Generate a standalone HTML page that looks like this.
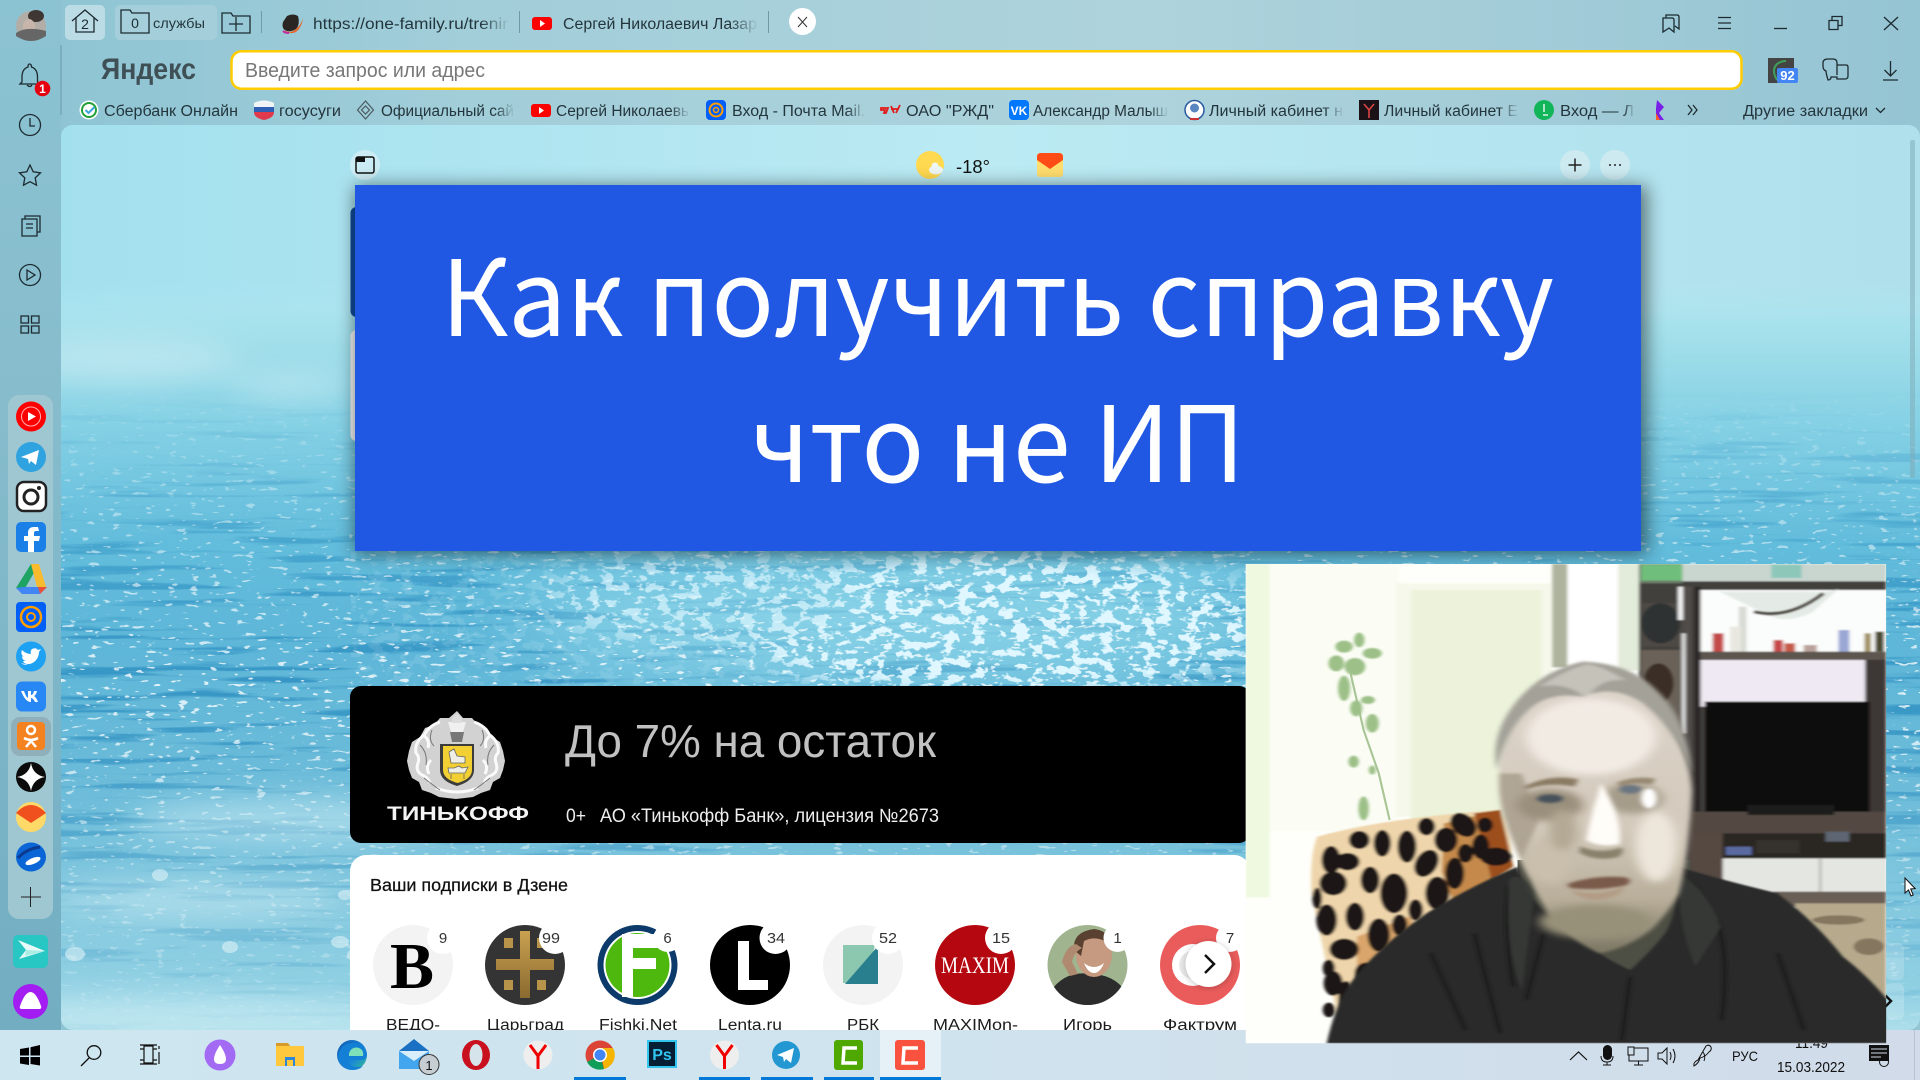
<!DOCTYPE html>
<html lang="ru"><head><meta charset="utf-8"><title>Как получить справку</title>
<style>html,body{margin:0;padding:0;width:1920px;height:1080px;overflow:hidden;background:#a8d0da}
svg{display:block}
text{font-family:"Liberation Sans","Noto Sans CJK SC",sans-serif}
.t{font-size:15.5px;fill:#24363d}
.ft{font-size:15.5px;fill:url(#f1)}
.n{font-size:15.5px;fill:#1c1c1c}
.b{font-size:15px;fill:#333;text-anchor:middle}
.i{fill:none;stroke:#1d2b31;stroke-width:1.3}
</style></head><body>
<svg xmlns="http://www.w3.org/2000/svg" width="1920" height="1080" viewBox="0 0 1920 1080">
<defs>
<linearGradient id="chrome" x1="0" x2="1" y1="0" y2="0"><stop offset="0" stop-color="#8cc3d3"/><stop offset=".25" stop-color="#a2ced9"/><stop offset=".6" stop-color="#aed3dc"/><stop offset="1" stop-color="#95c4d3"/></linearGradient>
<linearGradient id="side" x1="0" x2="0" y1="0" y2="1"><stop offset="0" stop-color="#8cc3d2"/><stop offset=".4" stop-color="#86bccc"/><stop offset="1" stop-color="#72adc2"/></linearGradient>
<linearGradient id="water" x1="0" x2="0" y1="0" y2="1">
<stop offset="0" stop-color="#ade4ef"/><stop offset=".2" stop-color="#ace5ef"/><stop offset=".25" stop-color="#9edde9"/><stop offset=".34" stop-color="#82cfe4"/><stop offset=".46" stop-color="#62bcdb"/><stop offset=".58" stop-color="#5eb6d8"/><stop offset=".74" stop-color="#6dbcd9"/><stop offset=".87" stop-color="#85c9df"/><stop offset=".96" stop-color="#90d0e3"/><stop offset="1" stop-color="#addfea"/></linearGradient>
<linearGradient id="topfade" x1="0" x2="1" y1="0" y2="0"><stop offset="0" stop-color="#a3e0ee"/><stop offset=".5" stop-color="#bbeaf3"/><stop offset="1" stop-color="#afe0ec"/></linearGradient>
<linearGradient id="tf2" x1="0" x2="0" y1="0" y2="1"><stop offset="0" stop-color="#fff"/><stop offset=".8" stop-color="#fff"/><stop offset="1" stop-color="#000"/></linearGradient>
<mask id="mTop" maskUnits="userSpaceOnUse" x="61" y="125" width="1859" height="905"><rect x="61" y="125" width="1859" height="905" fill="#000"/><rect x="61" y="125" width="1859" height="200" fill="url(#tf2)"/></mask>
<linearGradient id="rm" x1="0" x2="0" y1="0" y2="1"><stop offset="0" stop-color="#000"/><stop offset=".29" stop-color="#000"/><stop offset=".42" stop-color="#777"/><stop offset=".62" stop-color="#fff"/><stop offset=".8" stop-color="#888"/><stop offset="1" stop-color="#222"/></linearGradient>
<mask id="mRip" maskUnits="userSpaceOnUse" x="61" y="125" width="1859" height="905"><rect x="61" y="125" width="1859" height="905" fill="url(#rm)"/></mask>
<filter id="ripple" x="0" y="0" width="1" height="1" color-interpolation-filters="sRGB"><feTurbulence type="fractalNoise" baseFrequency="0.006 0.11" numOctaves="3" seed="7"/><feColorMatrix values="0 0 0 0 .10  0 0 0 0 .50  0 0 0 0 .72  7 0 0 0 -3.9"/></filter>
<filter id="spark" x="0" y="0" width="1" height="1" color-interpolation-filters="sRGB"><feTurbulence type="fractalNoise" baseFrequency="0.09 0.24" numOctaves="2" seed="11"/><feColorMatrix values="0 0 0 0 1  0 0 0 0 1  0 0 0 0 1  18 0 0 0 -12"/></filter>
<filter id="foam" x="0" y="0" width="1" height="1" color-interpolation-filters="sRGB"><feTurbulence type="fractalNoise" baseFrequency="0.07 0.12" numOctaves="3" seed="3"/><feColorMatrix values="0 0 0 0 .88  0 0 0 0 .97  0 0 0 0 1  14 0 0 0 -7.4"/></filter>
<filter id="b40"><feGaussianBlur stdDeviation="40"/></filter>
<filter id="b18"><feGaussianBlur stdDeviation="18 10"/></filter>
<filter id="b3"><feGaussianBlur stdDeviation="3.5 2.5"/></filter>
<filter id="b6"><feGaussianBlur stdDeviation="6 4"/></filter>
<filter id="b10" x="-30%" y="-30%" width="160%" height="160%"><feGaussianBlur stdDeviation="13 10"/></filter>
<filter id="b14"><feGaussianBlur stdDeviation="18 14"/></filter>
<filter id="sh" x="-5%" y="-8%" width="110%" height="116%"><feGaussianBlur stdDeviation="9"/></filter>
<mask id="mFoam" maskUnits="userSpaceOnUse" x="351" y="550" width="900" height="140"><rect x="351" y="550" width="900" height="140" fill="#222"/><ellipse cx="1000" cy="625" rx="270" ry="70" fill="#fff" filter="url(#b18)"/><ellipse cx="700" cy="600" rx="150" ry="45" fill="#aaa" filter="url(#b18)"/></mask>
<clipPath id="content"><rect x="61" y="125" width="1859" height="905" rx="12"/></clipPath>
<clipPath id="cam"><rect x="13" y="12" width="1477" height="1438"/></clipPath>
<clipPath id="zen"><rect x="351" y="856" width="895" height="174"/></clipPath>
<linearGradient id="f1"><stop offset="0" stop-color="#24363d"/><stop offset=".86" stop-color="#24363d"/><stop offset="1" stop-color="#24363d" stop-opacity=".05"/></linearGradient>
<linearGradient id="task" x1="0" x2="1" y1="0" y2="0"><stop offset="0" stop-color="#cee6f0"/><stop offset=".5" stop-color="#cfe3ee"/><stop offset="1" stop-color="#d1dbe9"/></linearGradient>
<linearGradient id="gold" x1="0" x2="0" y1="0" y2="1"><stop offset="0" stop-color="#c9a14f"/><stop offset="1" stop-color="#8a6a30"/></linearGradient>
<linearGradient id="jaw" x1="0" x2="0" y1="0" y2="1"><stop offset="0" stop-color="#ddd4ca"/><stop offset=".55" stop-color="#d3c9bb"/><stop offset=".8" stop-color="#b8ae9a"/><stop offset="1" stop-color="#7a7662"/></linearGradient>
<linearGradient id="edge1" x1="0" x2="1" y1="0" y2="1"><stop offset="0" stop-color="#0f5cb0"/><stop offset=".6" stop-color="#1a86d8"/><stop offset="1" stop-color="#36c08c"/></linearGradient>
</defs>

<!-- window chrome -->
<rect width="1920" height="1030" fill="url(#chrome)"/>
<rect width="61" height="1030" fill="url(#side)"/>
<g clip-path="url(#content)">
<rect x="61" y="125" width="1859" height="905" fill="url(#water)"/>
<rect x="61" y="125" width="1859" height="200" fill="url(#topfade)" mask="url(#mTop)"/>
<rect x="61" y="125" width="1859" height="905" filter="url(#ripple)" mask="url(#mRip)" opacity=".6"/>
<ellipse cx="900" cy="620" rx="380" ry="60" fill="#a8e6f2" opacity=".6" filter="url(#b40)"/>
<rect x="61" y="125" width="1859" height="905" filter="url(#spark)" mask="url(#mRip)" opacity=".8"/>
<rect x="351" y="550" width="900" height="140" filter="url(#foam)" mask="url(#mFoam)"/>
<g fill="#cfeef5" opacity=".55" filter="url(#b14)"><ellipse cx="300" cy="820" rx="170" ry="22"/><ellipse cx="200" cy="900" rx="150" ry="18"/><ellipse cx="160" cy="1015" rx="240" ry="22"/><ellipse cx="120" cy="360" rx="120" ry="24"/><ellipse cx="290" cy="385" rx="60" ry="14"/></g>
<g fill="#e4f6fa" opacity=".55"><ellipse cx="340" cy="942" rx="9" ry="6"/><ellipse cx="355" cy="955" rx="8" ry="6"/><ellipse cx="230" cy="947" rx="8" ry="6"/><ellipse cx="345" cy="895" rx="7" ry="5"/><ellipse cx="160" cy="875" rx="8" ry="6"/><ellipse cx="75" cy="954" rx="10" ry="7"/></g>
<rect x="1910" y="140" width="5" height="338" fill="#7ea9b5" opacity=".5" rx="2"/>
<rect x="1886" y="943" width="18" height="37" rx="6" fill="#fff" opacity=".18"/><rect x="1886" y="983" width="18" height="37" rx="6" fill="#fff" opacity=".18"/>
</g>
<path d="M1885 995l6 6-6 6" fill="none" stroke="#111" stroke-width="2.5"/>

<!-- avatar -->
<circle cx="31" cy="26" r="15" fill="#b3ada8"/><ellipse cx="36" cy="16" rx="8" ry="6" fill="#3e3733"/><ellipse cx="29" cy="27" rx="6" ry="8" fill="#c7b5ab"/><path d="M16 33q10-7 30-2v5q-15 10-30 0z" fill="#666"/>

<!-- tabs -->
<rect x="65" y="5" width="40" height="35" rx="5" fill="#bcdce5"/>
<rect x="115" y="5" width="102" height="35" rx="5" fill="#a4cfda"/>
<path class="i" d="M72 21l13-11 13 11m-4-3v14H76V18"/><text x="85" y="29" font-size="14" text-anchor="middle" fill="#1d2b31">2</text>
<path class="i" d="M121 33V10h9l2 3h17v20z"/><text x="135" y="28" font-size="14" text-anchor="middle" fill="#1d2b31">0</text>
<text x="153" y="28" font-size="14" textLength="52" lengthAdjust="spacingAndGlyphs" fill="#24363d">службы</text>
<path class="i" d="M222 33V13h9l2 3h17v17zm14-16v14m-7-7h14"/>
<path d="M261.500 11v22M519.500 11v22M768.500 11v22" stroke="#6f9aa6" stroke-width="1"/>
<path d="M287 31q-6-2-4-9l4-6q6-3 11 0 2 7-1 12-4 4-10 3z" fill="#2a2523"/><path d="M284 30q7 4 12-1 5-4 7-11-1 9-7 14-7 3-12-2z" fill="#e9662c"/><path d="M283 31q2 2 6 2" stroke="#c0309a" stroke-width="2" fill="none"/>
<text x="313" y="29" class="ft" textLength="195" lengthAdjust="spacingAndGlyphs">https://one-family.ru/trenir</text>
<rect x="532" y="17" width="20" height="13" rx="3" fill="#f00"/><path d="M540 20l5 3.500-5 3.500z" fill="#fff"/>
<text x="563" y="29" class="ft" textLength="194" lengthAdjust="spacingAndGlyphs">Сергей Николаевич Лазар</text>
<circle cx="802.500" cy="21.500" r="13.500" fill="#fff"/><path d="M798 17l9 10m0-10l-9 10" stroke="#333" stroke-width="1"/>

<!-- window controls -->
<path class="i" d="M1663 18h9q2 0 2 2v12l-5-4-6 4zM1666 18v-3h11q2 0 2 2v12l-4-3"/>
<path class="i" d="M1718 17.500h13M1718 23h13M1718 28.500h13"/>
<path class="i" d="M1774 28.500h13"/>
<path class="i" d="M1829 20.500h9v9h-9zM1832 20v-3.500h10v9h-4"/>
<path class="i" d="M1884 17l14 13m0-13l-14 13"/>

<!-- address row -->
<text x="101" y="79" font-size="30" font-weight="700" textLength="95" lengthAdjust="spacingAndGlyphs" fill="#3e4f56">Яндекс</text>
<rect x="231.500" y="51.250" width="1510" height="37.500" rx="10" fill="#fff" stroke="#ffcc00" stroke-width="2.500"/>
<text x="245" y="77" font-size="20" textLength="240" lengthAdjust="spacingAndGlyphs" fill="#777">Введите запрос или адрес</text>
<rect x="1768" y="58" width="26" height="25" fill="#444"/><path d="M1777 80q-6-10 0-16 4-3 9-3" fill="none" stroke="#3f9e5a" stroke-width="2"/><rect x="1777" y="68" width="21" height="15" rx="2" fill="#4285f4"/><text x="1787.500" y="80" font-size="13" font-weight="700" text-anchor="middle" fill="#fff">92</text>
<path class="i" d="M1828 80q-2-7-2-9-3-1-3-5v-3q0-4 5-4h5q4 0 4 4v2h9q2 0 2 2v9q0 3-3 3h-8v-2h-6q0 3-3 3zm9-17v12"/>
<path class="i" d="M1890.500 61v15m-6-6l6 6 6-6M1883 80h15"/>

<!-- bookmarks -->
<g>
<circle cx="89" cy="110" r="9.500" fill="#fff"/><circle cx="89" cy="110" r="7" fill="none" stroke="#21a038" stroke-width="2"/><path d="M85.500 110l3 3 6-6" fill="none" stroke="#3aa6d8" stroke-width="2"/>
<text x="104" y="116" class="t" textLength="134" lengthAdjust="spacingAndGlyphs">Сбербанк Онлайн</text>
<path d="M254 103q10-5 20 0v6h-20z" fill="#f0f4f6"/><path d="M254 107h20v6h-20z" fill="#2f5fb5"/><path d="M254 112h20q0 6-10 8-10-2-10-8z" fill="#e0394b"/>
<text x="279" y="116" class="t" textLength="62" lengthAdjust="spacingAndGlyphs">госусуги</text>
<path d="M365.500 101l8 9-8 9-8-9zM365.500 106l4 4-4 4-4-4z" fill="none" stroke="#4a5a60" stroke-width="1.200"/>
<text x="381" y="116" class="ft" textLength="133" lengthAdjust="spacingAndGlyphs">Официальный сай</text>
<rect x="531" y="104" width="20" height="13" rx="3" fill="#f00"/><path d="M539 107l5 3.500-5 3.500z" fill="#fff"/>
<text x="556" y="116" class="ft" textLength="133" lengthAdjust="spacingAndGlyphs">Сергей Николаевь</text>
<rect x="706" y="100" width="20" height="20" rx="4" fill="#005ff9"/><circle cx="716" cy="110" r="6.500" fill="none" stroke="#ff9e00" stroke-width="2"/><circle cx="716" cy="110" r="2.500" fill="none" stroke="#ff9e00" stroke-width="1.500"/>
<text x="732" y="116" class="ft" textLength="133" lengthAdjust="spacingAndGlyphs">Вход - Почта Mail.</text>
<path d="M881 108h7l-2 5h-2l1-3h-4zM891 106l3 7m6-8l-4 8m-5-4h8" stroke="#e21a1a" stroke-width="1.800" fill="none"/>
<text x="906" y="116" class="t" textLength="88" lengthAdjust="spacingAndGlyphs">ОАО "РЖД"</text>
<rect x="1009" y="100" width="20" height="20" rx="4" fill="#0077ff"/><text x="1019" y="115" font-size="12" font-weight="700" text-anchor="middle" fill="#fff">VK</text>
<text x="1033" y="116" class="ft" textLength="135" lengthAdjust="spacingAndGlyphs">Александр Малыш</text>
<circle cx="1194.500" cy="110" r="9.500" fill="#fff" stroke="#2a5aa0" stroke-width="1.500"/><circle cx="1194.500" cy="108" r="4.500" fill="#5b87c0"/><path d="M1190 119h9" stroke="#c33" stroke-width="2"/>
<text x="1209" y="116" class="ft" textLength="134" lengthAdjust="spacingAndGlyphs">Личный кабинет н</text>
<rect x="1359" y="100" width="20" height="20" fill="#1a1216"/><path d="M1364 104l5 6 5-6m-5 6v8" stroke="#d44" stroke-width="1.600" fill="none"/>
<text x="1384" y="116" class="ft" textLength="134" lengthAdjust="spacingAndGlyphs">Личный кабинет Е</text>
<circle cx="1544" cy="110" r="10" fill="#13b559"/><path d="M1544 104v8m-1 3h5" stroke="#fff" stroke-width="1.300"/>
<text x="1560" y="116" class="ft" textLength="74" lengthAdjust="spacingAndGlyphs">Вход — Л</text>
<path d="M1657 100l7 7-5 6 5 7h-8v-12z" fill="#7a1fe6"/><path d="M1656 113l4 7h-4z" fill="#ff5a20"/>
<path d="M1688 105l4 5-4 5m5-10l4 5-4 5" class="i"/>
<text x="1743" y="116" class="t" textLength="125" lengthAdjust="spacingAndGlyphs">Другие закладки</text>
<path d="M1876 108l4.500 4.500 4.500-4.500" class="i"/>
</g>

<!-- sidebar -->
<path d="M29.500 64q2 0 2 3 6 2 6 10v5l2 2H20l2-2v-5q0-8 6-10 0-3 1.500-3zM27 85q3 3 5 0" class="i"/>
<circle cx="42.500" cy="88.500" r="7.800" fill="#e5000f"/><text x="42.500" y="93" font-size="12" font-weight="700" text-anchor="middle" fill="#fff">1</text>
<path d="M61 45v70" stroke="#6f9aa6" stroke-width="1"/>
<circle cx="30" cy="125" r="10.500" class="i"/><path class="i" d="M30 118v8h5"/>
<path class="i" d="M30 165l3.200 6.800 7.300 1-5.300 5.100 1.300 7.300-6.500-3.500-6.500 3.500 1.300-7.300-5.300-5.100 7.300-1z"/>
<path class="i" d="M22 219h15v17H22zM25 219v-3h15v16h-3M26 224h7M26 228h7"/>
<circle cx="30" cy="275" r="10.500" class="i"/><path class="i" d="M27 270l8 5-8 5z"/>
<path class="i" d="M21 316h7.500v7H21zM31.500 316H39v7h-7.500zM21 326h7.500v7H21zM31.500 326H39v7h-7.500z"/>
<rect x="8" y="395" width="45" height="524" rx="11" fill="#9fc7d2"/>
<rect x="11" y="717" width="40" height="39" rx="9" fill="#8fb0bb"/>
<circle cx="31" cy="416.500" r="15" fill="#f00"/><circle cx="31" cy="416.500" r="9.500" fill="none" stroke="#ffb3b3" stroke-width="1"/><path d="M28 412l8 4.500-8 4.500z" fill="#fff"/>
<circle cx="31" cy="457" r="15" fill="#2fa3e0"/><path d="M21 457l18-7-3 15-5-4-2 3-1-5z" fill="#fff"/>
<rect x="17" y="482" width="29" height="29" rx="7" fill="#fff" stroke="#222" stroke-width="2.500"/><circle cx="31" cy="497" r="7" fill="none" stroke="#222" stroke-width="3"/><circle cx="39" cy="488" r="2" fill="#222"/>
<rect x="16" y="522" width="30" height="30" rx="5" fill="#1b7fe8"/><path d="M38 527h-4q-6 0-6 6v3h-4v5h4v11h6v-11h5l1-5h-6v-3q0-2 2-2h3z" fill="#fff"/>
<path d="M16 588l15-24 8 0-15 26z" fill="#1da462"/><path d="M16 588l6 6h18l7-7H24z" fill="#4285f4"/><path d="M31 564h8l7 23-9 0z" fill="#f9bb2d"/><path d="M38 587h9l-7 7z" fill="#e8503e"/>
<rect x="16" y="602" width="30" height="30" rx="4" fill="#005ff9"/><circle cx="31" cy="617" r="10" fill="none" stroke="#ff9e00" stroke-width="2.500"/><circle cx="31" cy="617" r="4" fill="none" stroke="#ff9e00" stroke-width="2"/>
<circle cx="31" cy="656.500" r="15" fill="#1da1f2"/><path d="M21 663q12 4 17-6 1-3 1-5l2-3-3 1q-2-3-6-1-2 2-1 5-5 0-9-4-2 4 2 7l-2-1q0 4 4 5h-3q1 3 5 3-3 2-7-1z" fill="#fff"/>
<rect x="16" y="681.500" width="30" height="30" rx="6" fill="#2787f5"/><path d="M21 691h3q2 6 4 7v-7h3v4q2 0 3-4h3q-1 4-3 5 2 1 4 6h-3q-2-4-4-4v4h-1q-5-1-9-11z" fill="#fff"/>
<rect x="17" y="722" width="28" height="28" rx="4" fill="#f58220"/><circle cx="31" cy="730" r="4" fill="none" stroke="#fff" stroke-width="2.500"/><path d="M24 738q7 4 14 0M31 741l-5 6m5-6l5 6" stroke="#fff" stroke-width="2.500" fill="none"/>
<ellipse cx="31" cy="777" rx="15" ry="15" fill="#0b0b0b"/><path d="M31 763q2 12 14 14-12 2-14 14-2-12-14-14 12-2 14-14z" fill="#fff"/>
<circle cx="31" cy="817" r="15" fill="#ffd968"/><path d="M16 813q15-16 30 0l-15 10z" fill="#f0501e"/>
<ellipse cx="31" cy="857" rx="15" ry="14.500" fill="#0a66d6"/><path d="M18 858q8-9 22-11" stroke="#0b3a90" stroke-width="3" fill="none"/><ellipse cx="33" cy="861" rx="8" ry="3" fill="#fff" transform="rotate(-22 33 861)"/>
<path d="M21 897h20M30.500 887v20" stroke="#222" stroke-width="1"/>
<rect x="13" y="935" width="35" height="33" rx="5" fill="#29c7c4"/><path d="M18 940l27 11-26 8 7-9z" fill="#e6fbf8"/><path d="M26 950l19 1-20 5z" fill="#a9ece4"/>
<circle cx="30.500" cy="1001.500" r="17.500" fill="#a31cf2"/><path d="M22 1009q-3 0-2-3 5-14 10.500-14t10.500 14q1 3-2 3z" fill="#fff"/>

<!-- widgets row -->
<circle cx="365" cy="165" r="15" fill="#d8f0f5" opacity=".7"/><rect x="356" y="157" width="18" height="16" rx="2" fill="none" stroke="#111" stroke-width="1.500"/><rect x="356" y="157" width="9" height="5" fill="#111"/>
<circle cx="930" cy="165" r="14" fill="#ffd94f"/><ellipse cx="936" cy="170" rx="7" ry="4.500" fill="#eef6f6"/><circle cx="935" cy="166" r="3.500" fill="#eef6f6"/>
<text x="956" y="173" font-size="18" textLength="34" lengthAdjust="spacingAndGlyphs" fill="#111">-18°</text>
<rect x="1037" y="153" width="26" height="24" rx="3" fill="#ffdd6e"/><path d="M1037 157q0-4 4-4h18q4 0 4 4v3l-13 9-13-9z" fill="#ff4c16"/>
<circle cx="1575" cy="165" r="15" fill="#d5ecf1" opacity=".75"/><path d="M1568.500 165h13M1575 158.500v13" stroke="#222" stroke-width="1.500"/>
<circle cx="1615" cy="165" r="15" fill="#d5ecf1" opacity=".75"/><path d="M1609 165h2M1614 165h2M1619 165h2" stroke="#222" stroke-width="1.600"/>

<!-- cards behind -->
<rect x="350.500" y="207" width="20" height="110" rx="6" fill="#0f4c9c"/>
<rect x="350.500" y="330" width="20" height="111" rx="6" fill="#f3f5f6"/>

<!-- blue title card -->
<rect x="355" y="186" width="1292" height="368" fill="#000" opacity=".5" filter="url(#sh)"/>
<rect x="355" y="185" width="1286" height="366" fill="#2058e3"/>
<text x="441" y="336" font-size="105" textLength="1113" lengthAdjust="spacingAndGlyphs" fill="#fff" style="font-family:'Noto Sans CJK SC','Liberation Sans',sans-serif">Как получить справку</text>
<text x="750" y="482" font-size="105" textLength="495" lengthAdjust="spacingAndGlyphs" fill="#fff" style="font-family:'Noto Sans CJK SC','Liberation Sans',sans-serif">что не ИП</text>

<!-- tinkoff banner -->
<rect x="350" y="686" width="900" height="157" rx="11" fill="#000"/>
<g>
<path d="M457 711l6 7 9 0 6 7 9 3 5 9 8 5 3 9 2 10-2 9-3 8-7 4-3 8-9 3-8 4-8 1-9 1-9-1-8-1-8-4-9-3-3-8-7-4-3-8-2-9 2-10 3-9 8-5 5-9 9-3 6-7 9 0z" fill="#d2d2d2"/>
<g fill="none" stroke="#fafafa" stroke-width="3"><path d="M424 735q-10 8-8 18 4 4 2 10-3 8 4 12 6 2 8 8"/><path d="M490 735q10 8 8 18-4 4-2 10 3 8-4 12-6 2-8 8"/><path d="M440 722q-12 4-16 14 6 4 4 12"/><path d="M474 722q12 4 16 14-6 4-4 12"/><path d="M436 788q21 8 42 0"/><path d="M431 760q-6 6-2 14M483 760q6 6 2 14"/></g>
<g fill="none" stroke="#777" stroke-width="1"><path d="M420 745q8 8 6 20M494 745q-8 8-6 20M432 730q-4 10 2 16M482 730q4 10-2 16M424 778q10 8 16 12M490 778q-10 8-16 12"/></g>
<path d="M448 722h18l-3 10h-12z" fill="#f0f0f0"/><path d="M452 718l5-4 5 4v5h-10z" fill="#ddd"/><path d="M450 732h14l-2 10h-10z" fill="#777"/>
<path d="M440 744h34v26q0 11-17 16-17-5-17-16z" fill="#3c3c3c"/>
<path d="M443 746h29v24q0 9-14.500 13-14.500-4-14.500-13z" fill="#f2d033"/>
<path d="M449 752l5-3 3 7 8 1v6h-14zM449 773h16l3-6-6 1-3-2-5 2-6 0zM451 774v5M464 774v5" fill="#f0efe6" stroke="#666" stroke-width=".8"/>
<text x="387" y="820" font-size="19" font-weight="700" textLength="142" lengthAdjust="spacingAndGlyphs" fill="#f4f4f4">ТИНЬКОФФ</text>
</g>
<text x="565" y="757" font-size="46" textLength="371" lengthAdjust="spacingAndGlyphs" fill="#c1c1c1">До 7% на остаток</text>
<text x="566" y="822" font-size="19" textLength="20" lengthAdjust="spacingAndGlyphs" fill="#eee">0+</text>
<text x="600" y="822" font-size="19" textLength="339" lengthAdjust="spacingAndGlyphs" fill="#eee">АО «Тинькофф Банк», лицензия №2673</text>

<!-- zen card -->
<rect x="350" y="855" width="900" height="200" rx="16" fill="#fff"/>
<text x="370" y="891" font-size="17.500" textLength="198" lengthAdjust="spacingAndGlyphs" fill="#111" stroke="#111" stroke-width=".25">Ваши подписки в Дзене</text>
<g clip-path="url(#zen)">
<circle cx="413" cy="965" r="40" fill="#f3f3f3"/><text x="412" y="988" font-size="66" font-weight="700" text-anchor="middle" fill="#000" style="font-family:'Liberation Serif',serif">В</text>
<circle cx="525" cy="965" r="40" fill="#343434"/><path d="M520 931h10v28h24v11h-24v28h-10v-28h-24v-11h24z" fill="url(#gold)"/><g fill="#b8934a"><rect x="504" y="938" width="9" height="10"/><rect x="537" y="938" width="9" height="10"/><rect x="504" y="980" width="9" height="10"/><rect x="537" y="980" width="9" height="10"/></g>
<circle cx="637.500" cy="965" r="40" fill="#0b3a6b"/><circle cx="637.500" cy="965" r="34" fill="#fff"/><circle cx="637.500" cy="965" r="32" fill="#4fb80f"/><path d="M622 934h32v-1l6 6v9h-27v10h23v11h-23v28h-11z" fill="#fff"/>
<circle cx="750" cy="965" r="40" fill="#000"/><path d="M738 941h11v39h19v10h-30z" fill="#fff"/>
<circle cx="863" cy="965" r="40" fill="#f3f3f3"/><path d="M843 945h32l-2 8-18 30h-12z" fill="#8cc7b0"/><path d="M878 946v38h-33z" fill="#2a7f8e"/>
<circle cx="975" cy="965" r="40" fill="#b5070f"/><text x="941" y="973" font-size="23" textLength="68" lengthAdjust="spacingAndGlyphs" fill="#fff" style="font-family:'Liberation Serif',serif">MAXIM</text>
<clipPath id="ig"><circle cx="1087.500" cy="965" r="40"/></clipPath>
<g clip-path="url(#ig)"><rect x="1047" y="925" width="81" height="81" fill="#9fb48f"/><path d="M1050 992q15-22 40-18 24 0 36 18v15h-76z" fill="#2c2c2c"/><ellipse cx="1094" cy="955" rx="18" ry="22" fill="#c69a80"/><path d="M1074 950q-2-18 20-21 16 2 14 14-12-8-24-2l-3 15z" fill="#5a4030"/><path d="M1062 962q4-16 14-18l6 4q-8 4-10 14l6 12-8 2z" fill="#b08a70"/><path d="M1084 963q10 8 20 0-4 10-10 10t-10-10z" fill="#fff"/></g>
<circle cx="1200" cy="965" r="40" fill="#ea5c5c"/><path d="M1180 952h40v26h-30z" fill="#f5f5f5"/><circle cx="1193" cy="965" r="21" fill="#fff"/><circle cx="1193" cy="965" r="14" fill="#ececec"/>
<g fill="#fff"><circle cx="443" cy="938" r="16"/><circle cx="555" cy="938" r="16"/><circle cx="667.500" cy="938" r="14"/><circle cx="775.500" cy="938" r="16"/><circle cx="888" cy="938" r="16"/><circle cx="1001" cy="938" r="16"/><circle cx="1117.500" cy="938" r="14"/><circle cx="1230" cy="938" r="14"/></g>
<text x="443" y="943" class="b">9</text><text x="542" y="943" font-size="15" fill="#333" textLength="18" lengthAdjust="spacingAndGlyphs">99</text><text x="667.500" y="943" class="b">6</text><text x="767" y="943" font-size="15" fill="#333" textLength="18" lengthAdjust="spacingAndGlyphs">34</text><text x="879" y="943" font-size="15" fill="#333" textLength="18" lengthAdjust="spacingAndGlyphs">52</text><text x="992" y="943" font-size="15" fill="#333" textLength="18" lengthAdjust="spacingAndGlyphs">15</text><text x="1117.500" y="943" class="b">1</text><text x="1230" y="943" class="b">7</text>
<circle cx="1208.500" cy="965" r="24" fill="#000" opacity=".18" filter="url(#b3)"/><circle cx="1208.500" cy="964" r="23" fill="#fff"/><path d="M1205 955l9 9-9 9" fill="none" stroke="#111" stroke-width="2.500"/>
<text x="386" y="1030" class="n" textLength="54" lengthAdjust="spacingAndGlyphs">ВЕДО-</text>
<text x="487" y="1030" class="n" textLength="77" lengthAdjust="spacingAndGlyphs">Царьград</text>
<text x="599" y="1030" class="n" textLength="78" lengthAdjust="spacingAndGlyphs">Fishki.Net</text>
<text x="718" y="1030" class="n" textLength="64" lengthAdjust="spacingAndGlyphs">Lenta.ru</text>
<text x="847" y="1030" class="n" textLength="32" lengthAdjust="spacingAndGlyphs">РБК</text>
<text x="933" y="1030" class="n" textLength="85" lengthAdjust="spacingAndGlyphs">MAXIMon-</text>
<text x="1063" y="1030" class="n" textLength="49" lengthAdjust="spacingAndGlyphs">Игорь</text>
<text x="1163" y="1030" class="n" textLength="74" lengthAdjust="spacingAndGlyphs">Фактрум</text>
</g>

<!-- taskbar -->
<rect y="1030" width="1920" height="50" fill="url(#task)"/>
<path d="M20 1049l9-1.500v8h-9zM30.500 1047.300L40 1045v10.500h-9.500zM20 1057h9v8l-9-1.500zM30.500 1057H40v8.500l-9.500-1.500z" fill="#000"/>
<circle cx="94" cy="1052.500" r="6.800" fill="none" stroke="#111" stroke-width="1.300"/><path d="M89 1058l-8 8" stroke="#111" stroke-width="1.300"/>
<path d="M144 1046h9v17h-9zM140 1049h4M140 1060h4M153 1049h4M153 1060h4M140 1064h17M140 1045h17M159 1046v3M159 1052v12" fill="none" stroke="#111" stroke-width="1.200"/>
<ellipse cx="220" cy="1055" rx="15.500" ry="15.500" fill="#a36bf4"/><path d="M220 1045q6 9 6 14 0 5-6 5t-6-5q0-5 6-14z" fill="#fff"/>
<path d="M276 1043h12l2 3h14v20h-28z" fill="#ffc83d"/><path d="M276 1043h12l2 3h-14z" fill="#d59a2a"/><rect x="285" y="1057" width="10" height="9" fill="#2f86d8"/><rect x="287" y="1060" width="6" height="6" fill="#ffc83d"/>
<circle cx="352" cy="1055" r="15" fill="url(#edge1)"/><path d="M338 1056q3-13 15-13 12 0 14 11 0 6-7 6h-12q1 7 10 7 3 0 5-1-4 4-10 4-14-1-15-14z" fill="#1380d6"/><path d="M349 1053q3-7 10-5 5 2 4 8h-14z" fill="#7de0b8"/>
<path d="M399 1051l15-12 15 12v18h-30z" fill="#1a70c2"/><path d="M399 1051h30v18h-30z" fill="#42a5ee"/><path d="M399 1051l15 10 15-10" fill="#d8eefb"/>
<circle cx="429" cy="1064.500" r="10" fill="#c7ced3" stroke="#333" stroke-width="1"/><text x="429" y="1070" font-size="13" text-anchor="middle" fill="#111">1</text>
<ellipse cx="476" cy="1055" rx="14" ry="15" fill="#c8101e"/><ellipse cx="476" cy="1055" rx="6.500" ry="11" fill="#d5e3eb"/>
<circle cx="538" cy="1055" r="14.500" fill="#eee"/><path d="M530 1045l8 11 8-11M538 1056v13" fill="none" stroke="#f00000" stroke-width="3"/>
<circle cx="600" cy="1055" r="14.500" fill="#db4437"/><path d="M600 1055l-13 7a14.500 14.500 0 0 0 17 7z" fill="#0f9d58"/><path d="M600 1048h13a14.500 14.500 0 0 1-9 21z" fill="#f4b400"/><circle cx="600" cy="1055" r="7" fill="#fff"/><circle cx="600" cy="1055" r="5.500" fill="#4285f4"/>
<rect x="647" y="1040" width="30" height="28" fill="#31c5f0"/><rect x="649" y="1042" width="26" height="24" fill="#061e33"/><text x="662" y="1060" font-size="16" font-weight="700" text-anchor="middle" fill="#31c5f0">Ps</text>
<circle cx="724.500" cy="1055" r="14.500" fill="#eee"/><path d="M716.500 1045l8 11 8-11M724.500 1056v13" fill="none" stroke="#f00000" stroke-width="3"/>
<circle cx="786" cy="1055" r="14" fill="#2297d2"/><path d="M777 1055l17-7-3 15-5-4-2 3-1-5z" fill="#fff"/>
<rect x="834" y="1040" width="29" height="30" rx="3" fill="#4ea800"/><path d="M857 1048h-13l-1 15h14" fill="none" stroke="#fff" stroke-width="3.500"/>
<rect x="880" y="1030" width="61" height="50" fill="#e6f1f7"/>
<rect x="895" y="1040" width="30" height="30" rx="3" fill="#f9533f"/><path d="M918 1048h-14l-1 15h15" fill="none" stroke="#fff" stroke-width="3.500"/>
<g fill="#0078d7"><rect x="574" y="1077" width="52" height="3"/><rect x="699" y="1077" width="51" height="3"/><rect x="761" y="1077" width="52" height="3"/><rect x="824" y="1077" width="50" height="3"/><rect x="880" y="1077" width="61" height="3"/></g>
<path d="M1570 1060l8.500-8 8.500 8" fill="none" stroke="#111" stroke-width="1.200"/>
<rect x="1603" y="1045" width="9" height="15" rx="4.500" fill="#111"/><path d="M1601 1056q0 6 6 6t6-6M1607 1062v3M1603 1065h8" fill="none" stroke="#111"/>
<path d="M1629 1048h19v13h-19zM1638.500 1061v4M1634 1065h9" fill="none" stroke="#111"/><rect x="1628" y="1047" width="6" height="8" fill="#cfdde9" stroke="#111"/>
<path d="M1658 1053h4l5-5v16l-5-5h-4zM1670 1052q2 4 0 8M1673 1049q4 7 0 14" fill="none" stroke="#111"/>
<path d="M1694 1066q-1-4 4-6l8-14q3-2 5 1 1 3-2 5-4 5-9 6-1 5-6 8zM1703 1052q3 4 1 9" fill="none" stroke="#111"/>
<text x="1732" y="1061" font-size="14" textLength="26" lengthAdjust="spacingAndGlyphs" fill="#111">РУС</text>
<text x="1795" y="1048" font-size="15" textLength="33" lengthAdjust="spacingAndGlyphs" fill="#111">11:49</text>
<text x="1777" y="1072" font-size="15" textLength="68" lengthAdjust="spacingAndGlyphs" fill="#111">15.03.2022</text>
<rect x="1869" y="1045" width="20" height="16" fill="#111"/><path d="M1871 1049h16M1871 1053h16M1871 1057h10" stroke="#d1dbe9" stroke-width="1"/><circle cx="1884" cy="1062" r="4.500" fill="none" stroke="#111"/>
<path d="M1914.500 1030v50" stroke="#b9c4d2"/>

<!-- webcam -->
<g transform="translate(1240 560) scale(.43367 .33333)" clip-path="url(#cam)">
<rect x="13" y="12" width="1477" height="1438" fill="#fefffa"/>
<g filter="url(#b3)">
<rect x="13" y="12" width="55" height="1000" fill="#eef9df"/>
<rect x="68" y="12" width="300" height="800" fill="#fbfdf4"/>
<rect x="360" y="70" width="360" height="700" fill="#f5f8ea"/>
<rect x="395" y="90" width="300" height="690" fill="#ecf3da"/>
<rect x="720" y="12" width="35" height="310" fill="#aeb39e"/>
<rect x="755" y="12" width="120" height="300" fill="#fff"/>
<rect x="872" y="12" width="50" height="320" fill="#e3ebda"/>
<rect x="920" y="12" width="570" height="1000" fill="#43403d"/>
<rect x="920" y="12" width="100" height="58" fill="#6a7a66"/><rect x="925" y="14" width="95" height="48" fill="#6fbe7c"/>
<rect x="1020" y="12" width="470" height="52" fill="#c9d6cf"/><rect x="1225" y="14" width="70" height="40" fill="#8cc7ba"/>
<rect x="925" y="130" width="95" height="130" fill="#4d4a45"/><ellipse cx="970" cy="190" rx="45" ry="60" fill="#2f3031"/>
<rect x="925" y="270" width="90" height="500" fill="#6a6258"/><ellipse cx="965" cy="370" rx="35" ry="60" fill="#3a2f28"/>
<rect x="1010" y="80" width="12" height="100" fill="#f4f4f4"/><rect x="1022" y="80" width="20" height="700" fill="#514c48"/><rect x="1018" y="220" width="10" height="300" fill="#d8d8d8"/><rect x="1048" y="80" width="14" height="700" fill="#2b2827"/>
<rect x="1062" y="90" width="428" height="195" fill="#fbfdfc"/><path d="M1105 95h215q25 5 60-8l-60 70q-60 35-100 10z" fill="#e4ebe6"/><path d="M1185 155q80 25 160-55" stroke="#545048" stroke-width="10" fill="none"/>
<rect x="1150" y="140" width="18" height="150" fill="#d8dcd4"/><rect x="1130" y="200" width="25" height="90" fill="#e8e8e0"/>
<rect x="1090" y="220" width="25" height="70" fill="#c44a4a"/><rect x="1230" y="240" width="22" height="45" fill="#c8464a"/><rect x="1255" y="250" width="25" height="35" fill="#c65a4a"/><rect x="1300" y="255" width="30" height="25" fill="#b9a299"/><rect x="1380" y="210" width="25" height="70" fill="#9aa6d4"/><rect x="1440" y="220" width="15" height="60" fill="#a09060"/><rect x="1465" y="215" width="20" height="60" fill="#4a4a30"/>
<rect x="1062" y="275" width="428" height="24" fill="#5d5650"/>
<rect x="1062" y="300" width="380" height="140" fill="#eee9f2"/><rect x="1442" y="300" width="48" height="460" fill="#3e3835"/>
<rect x="1072" y="425" width="380" height="335" fill="#0f1011"/>
<rect x="1038" y="755" width="452" height="65" fill="#524843"/><rect x="1170" y="735" width="200" height="30" fill="#1a1a1a"/>
<rect x="1038" y="820" width="75" height="140" fill="#574a43"/>
<rect x="1113" y="820" width="377" height="80" fill="#2a2524"/><rect x="1350" y="815" width="55" height="30" fill="#5d6672"/><rect x="1120" y="860" width="60" height="25" fill="#5a6aa0"/><rect x="1190" y="840" width="100" height="40" fill="#35302e"/>
<rect x="1113" y="895" width="377" height="105" fill="#e4e6e2"/><rect x="1335" y="895" width="6" height="105" fill="#b8b8b0"/>
<rect x="1230" y="995" width="260" height="45" fill="#6a5f56"/>
<rect x="1280" y="1030" width="210" height="300" fill="#b6a98c"/>
<g fill="#786a54" opacity=".8"><ellipse cx="1380" cy="1080" rx="60" ry="14"/><ellipse cx="1450" cy="1160" rx="35" ry="25"/></g>
</g>
<g fill="none" stroke="#a9c596" stroke-width="5"><path d="M345 780L320 640 285 510 255 340"/></g>
<g fill="#9cc087" filter="url(#b3)"><ellipse cx="240" cy="260" rx="20" ry="18"/><ellipse cx="275" cy="240" rx="12" ry="22"/><ellipse cx="305" cy="280" rx="22" ry="16"/><ellipse cx="222" cy="310" rx="18" ry="24"/><ellipse cx="265" cy="320" rx="24" ry="26"/><ellipse cx="240" cy="385" rx="14" ry="38"/><ellipse cx="295" cy="420" rx="16" ry="12"/><ellipse cx="268" cy="445" rx="14" ry="24"/><ellipse cx="305" cy="490" rx="15" ry="28"/><ellipse cx="262" cy="605" rx="12" ry="18"/><ellipse cx="305" cy="630" rx="8" ry="14"/><ellipse cx="285" cy="745" rx="12" ry="36"/></g>
<!-- chair -->
<g filter="url(#b3)">
<path d="M178 830q150-55 420-80 30 50 30 180L230 1400q-30-180-65-400-5-110 13-170z" fill="#efd5ab"/>
<path d="M470 790l130-40 25 175-130 110-30-100z" fill="#c58a4c"/><path d="M540 760l60-10 30 170-50 40z" fill="#9c4f1c"/><path d="M270 1130l120-60 30 60-150 150z" fill="#d9a56b"/>
<g fill="#1b1512"><ellipse cx="275" cy="840" rx="24" ry="27"/><ellipse cx="328" cy="850" rx="20" ry="40"/><ellipse cx="385" cy="860" rx="22" ry="48"/><ellipse cx="210" cy="900" rx="22" ry="42"/><ellipse cx="248" cy="905" rx="28" ry="26"/><ellipse cx="430" cy="910" rx="26" ry="42" transform="rotate(20 430 910)"/><ellipse cx="475" cy="840" rx="27" ry="37"/><ellipse cx="515" cy="795" rx="27" ry="38" transform="rotate(-30 515 795)"/><ellipse cx="565" cy="795" rx="18" ry="22"/><ellipse cx="430" cy="800" rx="20" ry="26"/><ellipse cx="300" cy="960" rx="22" ry="40"/><ellipse cx="215" cy="970" rx="32" ry="36"/><ellipse cx="355" cy="1000" rx="32" ry="60"/><ellipse cx="495" cy="940" rx="22" ry="47"/><ellipse cx="455" cy="1000" rx="28" ry="50"/><ellipse cx="405" cy="1050" rx="17" ry="32"/><ellipse cx="265" cy="1070" rx="22" ry="42"/><ellipse cx="200" cy="1080" rx="24" ry="47"/><ellipse cx="320" cy="1125" rx="26" ry="50"/><ellipse cx="368" cy="1095" rx="18" ry="32"/><ellipse cx="240" cy="1168" rx="34" ry="32"/><ellipse cx="178" cy="1015" rx="11" ry="32"/><ellipse cx="205" cy="1225" rx="14" ry="26"/><ellipse cx="290" cy="1240" rx="26" ry="32"/><ellipse cx="215" cy="1270" rx="22" ry="37"/><ellipse cx="245" cy="1310" rx="18" ry="47"/><ellipse cx="205" cy="1350" rx="14" ry="22"/><ellipse cx="555" cy="860" rx="20" ry="37"/><ellipse cx="590" cy="890" rx="37" ry="27"/><ellipse cx="520" cy="880" rx="18" ry="28"/></g>
</g>
<!-- neck -->
<rect x="640" y="900" width="400" height="420" fill="#4e4f44"/>
<!-- sweater -->
<path d="M200 1450q20-120 60-190 60-100 170-200 100-80 210-140 30 130 130 200 60 70 130 110 50-60 80-110 30-60 30-200 100 40 230 80 90 90 150 190 60 60 110 140v120z" fill="#292c2b" filter="url(#b3)"/>
<g fill="none" stroke="#1b1d1d" stroke-width="10" opacity=".8" filter="url(#b3)"><path d="M620 980q-10 150 10 300M700 1120l-40 200M440 1180l80 230M540 1120l60 300M1100 1080q30 120 10 300M1240 1180l60 230M900 1250l-20 190"/></g>
<path d="M620 960q20-30 60 30l-30 300q-40-120-30-330zM1010 940q60 40 100 160l-60 120q-40-120-40-280z" fill="#383b39" opacity=".85" filter="url(#b3)"/>
<!-- head -->
<g filter="url(#b6)">
<path d="M598 700Q585 520 680 400Q800 330 920 390Q1030 500 1042 690Q1036 880 1012 1000Q950 1150 830 1180Q720 1120 670 960Q620 850 598 700Z" fill="url(#jaw)"/>
<path d="M598 640Q590 760 650 900L690 780 650 640z" fill="#a99f8d" opacity=".85"/>
</g>
<g filter="url(#b10)">
<ellipse cx="810" cy="530" rx="150" ry="115" fill="#f1ebe4"/>
<ellipse cx="960" cy="860" rx="48" ry="105" fill="#ede6da"/>
<ellipse cx="715" cy="735" rx="76" ry="48" fill="#9a8f7b"/>
<ellipse cx="905" cy="715" rx="70" ry="46" fill="#a69c8a"/>
<ellipse cx="715" cy="900" rx="50" ry="70" fill="#c9bfac"/>
<ellipse cx="745" cy="810" rx="32" ry="62" fill="#b4a994"/>
<ellipse cx="820" cy="1085" rx="130" ry="50" fill="#989179"/>
</g>
<g filter="url(#b6)">
<path d="M592 630Q575 520 640 420Q700 330 790 305Q900 310 960 390Q1030 470 1042 640Q1005 510 930 430Q860 370 790 410Q700 390 650 470Q610 530 592 630z" fill="#a3a198"/>
<path d="M690 380q60-50 110-68 40 8 90 50-50-10-80 35-15 20-30 0-40-30-90-17z" fill="#c4c2b9"/>
<path d="M655 680q60-40 125-22l-8 22q-60-15-112 8z" fill="#8a7b63"/>
<path d="M870 668q40-22 88-12l-8 18q-40-8-74 5z" fill="#978972"/>
<ellipse cx="715" cy="716" rx="30" ry="13" fill="#46515c"/><ellipse cx="900" cy="688" rx="26" ry="13" fill="#6a7681"/>
<ellipse cx="943" cy="715" rx="18" ry="30" fill="#fff"/>
<path d="M832 670q-22 90-34 170 30 25 78 12 5-90-44-182z" fill="#fffdf8"/>
<path d="M785 858q40 26 95 4 8 18-10 30-50 14-88-14z" fill="#8a816c"/>
<path d="M755 972q60-28 135-20 18 10 0 24-70 18-130 8z" fill="#7a5a4a"/>
<path d="M762 988q60 26 126-10-10 38-66 42-40 0-60-32z" fill="#b39c86"/>
</g>
</g>

<!-- cursor -->
<path d="M1905 878v15l3.500-3 2.500 6 2.200-1-2.500-6 4.500-.4z" fill="#fff" stroke="#111" stroke-width="1"/>
</svg>
</body></html>
